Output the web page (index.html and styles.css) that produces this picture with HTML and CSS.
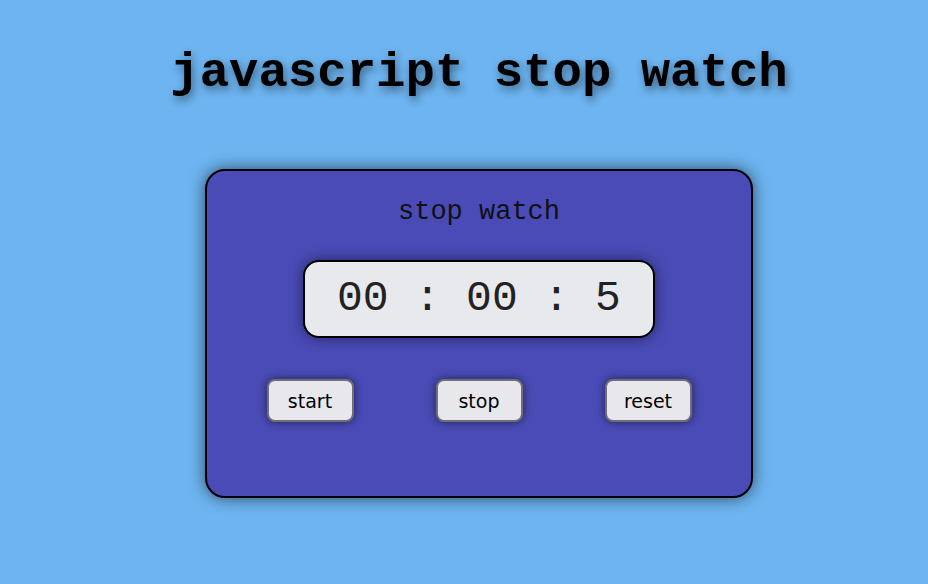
FILE: index.html
```html
<!DOCTYPE html>
<html>
<head>
<meta charset="utf-8">
<link rel="stylesheet" href="styles.css">
</head>
<body>
<h1 class="title">javascript stop watch</h1>
<div class="card">
  <div class="card-title">stop watch</div>
  <div class="display">00 : 00 : 5</div>
  <div class="buttons">
    <button class="btn">start</button>
    <button class="btn">stop</button>
    <button class="btn">reset</button>
  </div>
</div>
</body>
</html>
```
FILE: styles.css
```css
html, body {
  margin: 0;
  padding: 0;
}
body {
  background: #6db4f0;
  height: 584px;
  box-sizing: border-box;
  padding-left: 30px;
  display: flex;
  flex-direction: column;
  align-items: center;
}
.title {
  margin: 45px 0 0 0;
  font-family: "Courier New", "Nimbus Mono PS", "FreeMono", "Liberation Mono", monospace;
  font-weight: bold;
  font-size: 49px;
  line-height: 56px;
  color: #000;
  text-shadow: 2px 4px 8px rgba(0,0,0,0.45);
}
.card {
  margin-top: 68px;
  width: 544px;
  height: 325px;
  border: 2px solid #000;
  border-radius: 20px;
  background: #4a4bb6;
  box-shadow: 0 0 16px rgba(0,0,0,0.6);
  display: flex;
  flex-direction: column;
  align-items: center;
}
.card-title {
  margin-top: 25px;
  font-family: "Courier New", "Nimbus Mono PS", "FreeMono", "Liberation Mono", monospace;
  font-size: 27px;
  line-height: 32px;
  color: #111;
}
.display {
  margin-top: 32px;
  width: 348px;
  height: 74px;
  border: 2px solid #000;
  border-radius: 16px;
  background: #e8e9ed;
  box-shadow: 0 0 14px rgba(0,0,0,0.5);
  font-family: "Liberation Mono", monospace;
  font-size: 43px;
  line-height: 74px;
  text-align: center;
  color: #222;
}
.buttons {
  margin-top: 41px;
  display: flex;
  gap: 82px;
  justify-content: center;
}
.btn {
  width: 87px;
  height: 43px;
  border: 2px solid #6f6f7a;
  border-radius: 8px;
  background: #e8e8ec;
  box-shadow: 0 0 10px rgba(0,0,0,0.55);
  font-family: "DejaVu Sans", sans-serif;
  font-size: 19px;
  color: #000;
  padding: 0;
}
```
